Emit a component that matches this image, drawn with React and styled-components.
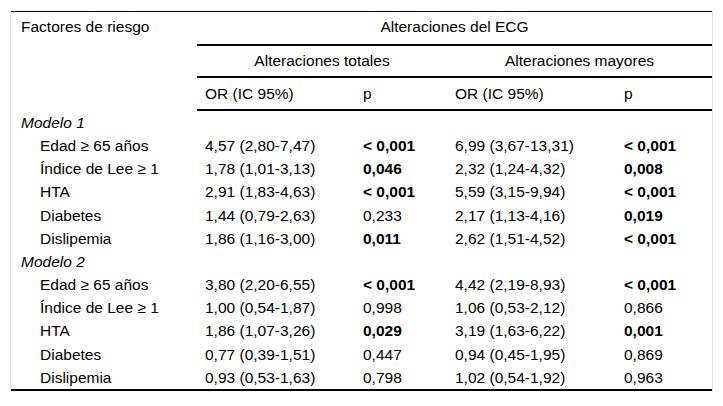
import React from 'react';
import styled, { createGlobalStyle } from 'styled-components';

const GlobalStyle = createGlobalStyle`
  html, body {
    margin: 0;
    padding: 0;
    background: #ffffff;
  }
  body {
    font-family: "Liberation Sans", Arial, sans-serif;
    color: #000000;
  }
`;

const Frame = styled.div`
  margin: 11px 0 0 10px;
  width: 701px;
  border-left: 1px solid #e3e3e3;
  border-right: 1px solid #e3e3e3;
`;

const Table = styled.table`
  width: 701px;
  border-collapse: collapse;
  table-layout: fixed;
  font-size: 15.5px;
  border-top: 1px solid #000;
  border-bottom: 2px solid #000;
`;

const HeadCell = styled.th`
  font-weight: normal;
  text-align: ${p => (p.$center ? 'center' : 'left')};
  vertical-align: ${p => (p.$top ? 'top' : 'middle')};
  padding: ${p => p.$pad || '6px 8px'};
  line-height: 18px;
  border-bottom: ${p => (p.$line ? '2px solid #000' : 'none')};
  white-space: nowrap;
`;

const Cell = styled.td`
  padding: 3px 8px;
  padding-left: ${p => (p.$indent ? '29px' : '8px')};
  line-height: 17.15px;
  font-weight: ${p => (p.$bold ? 'bold' : 'normal')};
  white-space: nowrap;
`;

const GroupCell = styled.td`
  padding: 3px 10px 3px;
  line-height: 17.15px;
  font-style: italic;
`;

const models = [
  {
    name: 'Modelo 1',
    rows: [
      ['Edad ≥ 65 años', '4,57 (2,80-7,47)', '< 0,001', true, '6,99 (3,67-13,31)', '< 0,001', true],
      ['Índice de Lee ≥ 1', '1,78 (1,01-3,13)', '0,046', true, '2,32 (1,24-4,32)', '0,008', true],
      ['HTA', '2,91 (1,83-4,63)', '< 0,001', true, '5,59 (3,15-9,94)', '< 0,001', true],
      ['Diabetes', '1,44 (0,79-2,63)', '0,233', false, '2,17 (1,13-4,16)', '0,019', true],
      ['Dislipemia', '1,86 (1,16-3,00)', '0,011', true, '2,62 (1,51-4,52)', '< 0,001', true],
    ],
  },
  {
    name: 'Modelo 2',
    rows: [
      ['Edad ≥ 65 años', '3,80 (2,20-6,55)', '< 0,001', true, '4,42 (2,19-8,93)', '< 0,001', true],
      ['Índice de Lee ≥ 1', '1,00 (0,54-1,87)', '0,998', false, '1,06 (0,53-2,12)', '0,866', false],
      ['HTA', '1,86 (1,07-3,26)', '0,029', true, '3,19 (1,63-6,22)', '0,001', true],
      ['Diabetes', '0,77 (0,39-1,51)', '0,447', false, '0,94 (0,45-1,95)', '0,869', false],
      ['Dislipemia', '0,93 (0,53-1,63)', '0,798', false, '1,02 (0,54-1,92)', '0,963', false],
    ],
  },
];

export default function App() {
  return (
    <>
      <GlobalStyle />
      <Frame>
        <Table>
          <colgroup>
            <col style={{ width: 186 }} />
            <col style={{ width: 158 }} />
            <col style={{ width: 92 }} />
            <col style={{ width: 169 }} />
            <col style={{ width: 96 }} />
          </colgroup>
          <thead>
            <tr>
              <HeadCell rowSpan={3} $top $pad="6px 10px">Factores de riesgo</HeadCell>
              <HeadCell colSpan={4} $center $line $pad="6px 8px 8px">Alteraciones del ECG</HeadCell>
            </tr>
            <tr>
              <HeadCell colSpan={2} $center $line>Alteraciones totales</HeadCell>
              <HeadCell colSpan={2} $center $line>Alteraciones mayores</HeadCell>
            </tr>
            <tr>
              <HeadCell $line $pad="7px 8px 6px">OR (IC 95%)</HeadCell>
              <HeadCell $line $pad="7px 8px 6px">p</HeadCell>
              <HeadCell $line $pad="7px 8px 6px">OR (IC 95%)</HeadCell>
              <HeadCell $line $pad="7px 8px 6px">p</HeadCell>
            </tr>
          </thead>
          <tbody>
            {models.map(m => (
              <React.Fragment key={m.name}>
                <tr>
                  <GroupCell colSpan={5}>{m.name}</GroupCell>
                </tr>
                {m.rows.map(r => (
                  <tr key={m.name + r[0]}>
                    <Cell $indent>{r[0]}</Cell>
                    <Cell>{r[1]}</Cell>
                    <Cell $bold={r[3]}>{r[2]}</Cell>
                    <Cell>{r[4]}</Cell>
                    <Cell $bold={r[6]}>{r[5]}</Cell>
                  </tr>
                ))}
              </React.Fragment>
            ))}
          </tbody>
        </Table>
      </Frame>
    </>
  );
}
